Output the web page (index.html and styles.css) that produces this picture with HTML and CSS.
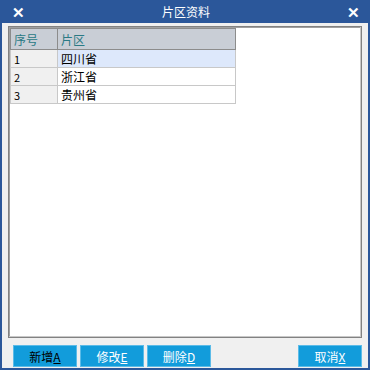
FILE: index.html
```html
<!DOCTYPE html>
<html lang="zh">
<head>
    <meta charset="UTF-8">
    <title>片区资料</title>
    <link rel="stylesheet" href="styles.css">
</head>
<body>
    <div class="window">
        <div class="titlebar">
            <span class="close">&#x2715;</span>
            <span class="title">片区资料</span>
            <span class="close">&#x2715;</span>
        </div>
        <div class="panel">
            <table class="grid">
                <tr class="head">
                    <th class="no">序号</th>
                    <th class="name">片区</th>
                </tr>
                <tr class="selected">
                    <td class="no">1</td>
                    <td>四川省</td>
                </tr>
                <tr>
                    <td class="no">2</td>
                    <td>浙江省</td>
                </tr>
                <tr>
                    <td class="no">3</td>
                    <td>贵州省</td>
                </tr>
            </table>
        </div>
        <div class="buttons">
            <button class="btn active">新增<u>A</u></button>
            <button class="btn">修改<u>E</u></button>
            <button class="btn">删除<u>D</u></button>
            <span class="spacer"></span>
            <button class="btn">取消<u>X</u></button>
        </div>
    </div>
</body>
</html>
```

FILE: styles.css
```css
body {
    margin: 0;
    font-family: "Noto Sans CJK SC", "Liberation Sans", sans-serif;
    font-size: 12px;
}

.window {
    width: 370px;
    height: 370px;
    box-sizing: border-box;
    background-color: #f0f0f0;
    border: 2px solid #2b579a;
    border-top: none;
    display: flex;
    flex-direction: column;
}

.titlebar {
    height: 23px;
    background-color: #2b579a;
    color: #fff;
    display: flex;
    align-items: center;
    justify-content: space-between;
    padding: 0 10px 0 12px;
    margin: 0 -2px;
}

.title {
    font-size: 12px;
}

.close {
    font-size: 15px;
    font-weight: bold;
}

.panel {
    margin: 3px 6px 0 6px;
    height: 310px;
    background-color: #fff;
    border: 1px solid #828282;
    box-shadow: inset -1px -1px 0 #c8c8c8, inset 1px 1px 0 #a0a0a0;
}

.grid {
    border-collapse: collapse;
    margin: 1px 0 0 1px;
}

.grid th,
.grid td {
    height: 17px;
    padding: 0 3px;
    text-align: left;
    font-weight: normal;
    border: 1px solid #c8c8c8;
    color: #000;
}

.grid th {
    height: 20px;
    background-color: #c9ced6;
    color: #2a7a85;
    border-color: #8c8c8c;
}

.grid .no {
    width: 40px;
}

.grid td.no {
    background-color: #f0f0f0;
    font-size: 11px;
}

.grid .name {
    width: 171px;
}

.grid .selected td:not(.no) {
    background-color: #dde8fb;
}

.buttons {
    display: flex;
    gap: 3px;
    margin-top: 7px;
    padding: 0 6px 0 11px;
}

.spacer {
    flex: 1;
}

.btn {
    width: 64px;
    height: 22px;
    background-color: #129cdb;
    border: 1px solid #5bbbe8;
    color: #fff;
    font-family: inherit;
    font-size: 12px;
    padding: 0;
}

.btn.active {
    color: #000;
}
```
